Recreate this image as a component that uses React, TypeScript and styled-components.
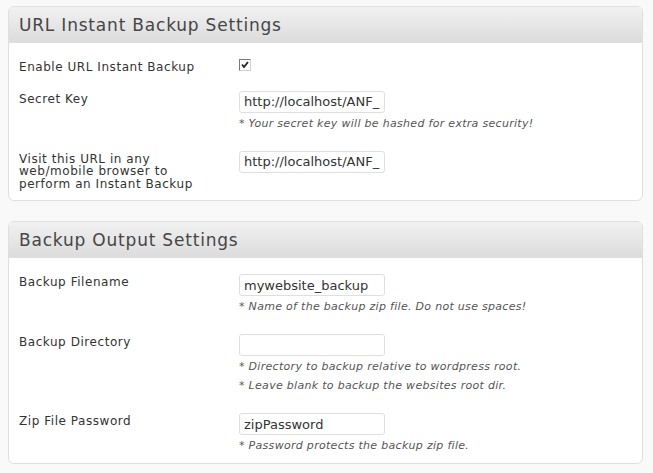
import React from 'react';
import styled, { createGlobalStyle } from 'styled-components';

const GlobalStyle = createGlobalStyle`
  html, body {
    margin: 0;
    padding: 0;
    background: #f9f9f9;
  }
  body {
    font-family: "DejaVu Sans", Verdana, sans-serif;
    color: #333333;
  }
`;

const Page = styled.div`
  padding: 6px 10px 0 8px;
  display: flex;
  flex-direction: column;
  gap: 20px;
`;

const Panel = styled.section`
  background: #ffffff;
  border: 1px solid #dfdfdf;
  border-radius: 6px;
  overflow: hidden;
`;

const PanelHeader = styled.h3`
  margin: 0;
  height: 35px;
  padding: 0 10px;
  display: flex;
  align-items: center;
  background: linear-gradient(to bottom, #f1f1f1, #dcdcdc);
  border-bottom: 1px solid #dfdfdf;
  font-family: "DejaVu Sans", Verdana, sans-serif;
  font-size: 17px;
  letter-spacing: 0.8px;
  font-weight: normal;
  color: #464646;
`;

const PanelBody = styled.div`
  padding-top: 6px;
`;

const Row = styled.div<{ $compact?: boolean }>`
  display: grid;
  grid-template-columns: 220px 1fr;
  padding: 10px 10px ${(p) => (p.$compact ? '7px' : '10px')};
`;

const Label = styled.div`
  font-size: 12px;
  letter-spacing: 0.55px;
  line-height: 12.5px;
  padding-top: 2px;
  padding-right: 26px;
  color: #333333;
`;

const Field = styled.div`
  display: flex;
  flex-direction: column;
  align-items: flex-start;
`;

const TextInput = styled.input`
  box-sizing: border-box;
  width: 146px;
  height: 22px;
  margin: 0;
  padding: 0 4px;
  border: 1px solid #dfdfdf;
  border-radius: 3px;
  background: #ffffff;
  font-family: "DejaVu Sans", Verdana, sans-serif;
  font-size: 13px;
  color: #333333;
  outline: none;
`;

const CheckBox = styled.span`
  box-sizing: border-box;
  width: 12px;
  height: 12px;
  border: 1px solid #7a7a7a;
  border-right-color: #d0d0d0;
  border-bottom-color: #d0d0d0;
  background: #ffffff;
  display: flex;
  align-items: center;
  justify-content: center;
`;

const Note = styled.p`
  margin: 4px 0 0;
  font-size: 11px;
  letter-spacing: 0.3px;
  line-height: 14px;
  font-style: italic;
  color: #555555;
  & + & {
    margin-top: 5px;
  }
`;

type SettingProps = {
  label: string;
  compact?: boolean;
  children: React.ReactNode;
};

const Setting: React.FC<SettingProps> = ({ label, compact, children }) => (
  <Row $compact={compact}>
    <Label>{label}</Label>
    <Field>{children}</Field>
  </Row>
);

const App: React.FC = () => {
  const url = 'http://localhost/ANF_Mobile/?instant_backup=1';
  return (
    <>
      <GlobalStyle />
      <Page>
        <Panel>
          <PanelHeader>URL Instant Backup Settings</PanelHeader>
          <PanelBody>
            <Setting label="Enable URL Instant Backup" compact>
              <CheckBox>
                <svg width="8" height="8" viewBox="0 0 8 8">
                  <path d="M1 3.5 L3 6 L7 1" fill="none" stroke="#222" strokeWidth="1.8" />
                </svg>
              </CheckBox>
            </Setting>
            <Setting label="Secret Key">
              <TextInput readOnly value={url} />
              <Note>* Your secret key will be hashed for extra security!</Note>
            </Setting>
            <Setting label="Visit this URL in any web/mobile browser to perform an Instant Backup">
              <TextInput readOnly value={url} />
            </Setting>
          </PanelBody>
        </Panel>
        <Panel>
          <PanelHeader>Backup Output Settings</PanelHeader>
          <PanelBody>
            <Setting label="Backup Filename">
              <TextInput readOnly value="mywebsite_backup" />
              <Note>* Name of the backup zip file. Do not use spaces!</Note>
            </Setting>
            <Setting label="Backup Directory">
              <TextInput readOnly value="" />
              <Note>* Directory to backup relative to wordpress root.</Note>
              <Note>* Leave blank to backup the websites root dir.</Note>
            </Setting>
            <Setting label="Zip File Password">
              <TextInput readOnly value="zipPassword" />
              <Note>* Password protects the backup zip file.</Note>
            </Setting>
          </PanelBody>
        </Panel>
      </Page>
    </>
  );
};

export default App;
